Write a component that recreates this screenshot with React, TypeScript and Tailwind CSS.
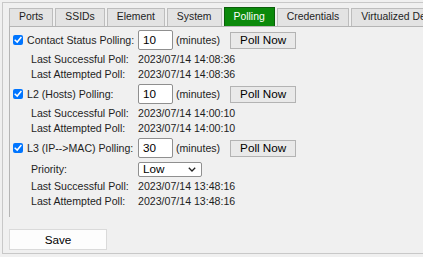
import React from "react";

const tabs = ["Ports", "SSIDs", "Element", "System", "Polling", "Credentials", "Virtualized Devices"];

function Check() {
  return (
    <span className="w-[10px] h-[10px] rounded-[2px] bg-[#0075ff] flex items-center justify-center shrink-0">
      <svg width="8" height="8" viewBox="0 0 8 8">
        <path d="M1.2 4.2 L3.2 6.1 L6.9 1.6" fill="none" stroke="white" strokeWidth="1.5" strokeLinecap="square" />
      </svg>
    </span>
  );
}

function PollRow({ label, value }: { label: string; value: string }) {
  return (
    <div className="flex h-[24px] items-center">
      <div className="w-[125px] flex items-center gap-[4px]">
        <Check />
        <span className="whitespace-nowrap">{label}</span>
      </div>
      <div className="flex items-center">
        <div className="w-[35px] h-[20px] bg-white border border-[#8f8f8f] rounded-[2px] flex items-center pl-[4px] text-[11.7px] text-black">{value}</div>
        <span className="ml-[3px]">(minutes)</span>
        <button className="ml-[10px] w-[66px] h-[17px] bg-[#e9e9e9] border border-[#b3b3b3] flex items-center justify-center text-[11.7px] text-black leading-none">Poll Now</button>
      </div>
    </div>
  );
}

function InfoRow({ label, value, h = 15 }: { label: string; value: string; h?: number }) {
  return (
    <div className={"flex items-center " + (h === 16 ? "h-[16px]" : "h-[15px]")}>
      <div className="w-[125px] pl-[18px] whitespace-nowrap">{label}</div>
      <div className="whitespace-nowrap">{value}</div>
    </div>
  );
}

export default function App() {
  return (
    <div className="w-[423px] h-[257px] bg-[#f0f0f0] pt-[2px] pl-[2px] overflow-hidden font-['Liberation_Sans',Arial,sans-serif] text-[10.6px] text-[#1e1e1e] leading-none">
      <div className="h-[252px] border-l border-t border-b border-[#c8c8c8] pl-[6px] pt-[5px]">
        <div className="flex items-end gap-[2px] h-[19px] -mt-[1px] text-[10.4px]">
          {tabs.map((t) =>
            t === "Polling" ? (
              <div key={t} className="h-[19px] px-[9px] border border-b-0 border-[#0a5e0a] bg-[#0b8a0b] text-white flex items-center whitespace-nowrap shrink-0">{t}</div>
            ) : (
              <div key={t} className="h-[18px] px-[9px] border border-b-0 border-[#bdbdbd] bg-[#e3e3e3] flex items-center whitespace-nowrap shrink-0">{t}</div>
            )
          )}
        </div>
        <div className="border-t border-l border-[#b5b5b5] pl-[3px] pt-[1px] pb-[8px]">
          <PollRow label="Contact Status Polling:" value="10" />
          <InfoRow label="Last Successful Poll:" value="2023/07/14 14:08:36" />
          <InfoRow label="Last Attempted Poll:" value="2023/07/14 14:08:36" />
          <PollRow label="L2 (Hosts) Polling:" value="10" />
          <InfoRow label="Last Successful Poll:" value="2023/07/14 14:00:10" />
          <InfoRow label="Last Attempted Poll:" value="2023/07/14 14:00:10" />
          <PollRow label="L3 (IP-->MAC) Polling:" value="30" />
          <div className="flex items-center h-[18px]">
            <div className="w-[125px] pl-[18px]">Priority:</div>
            <div className="w-[64px] h-[15px] bg-white border border-[#8f8f8f] rounded-[2px] flex items-center justify-between pl-[4px] pr-[5px] text-[11.7px] text-black">
              <span>Low</span>
              <svg width="8" height="5" viewBox="0 0 8 5">
                <path d="M0.8 0.8 L4 4 L7.2 0.8" fill="none" stroke="#222" strokeWidth="1.3" />
              </svg>
            </div>
          </div>
          <InfoRow label="Last Successful Poll:" value="2023/07/14 13:48:16" h={16} />
          <InfoRow label="Last Attempted Poll:" value="2023/07/14 13:48:16" />
        </div>
        <div className="pt-[12px]">
          <button className="w-[98px] h-[21px] bg-[#fdfdfd] border border-[#dadada] flex items-center justify-center text-[11.7px] text-black">Save</button>
        </div>
      </div>
    </div>
  );
}
